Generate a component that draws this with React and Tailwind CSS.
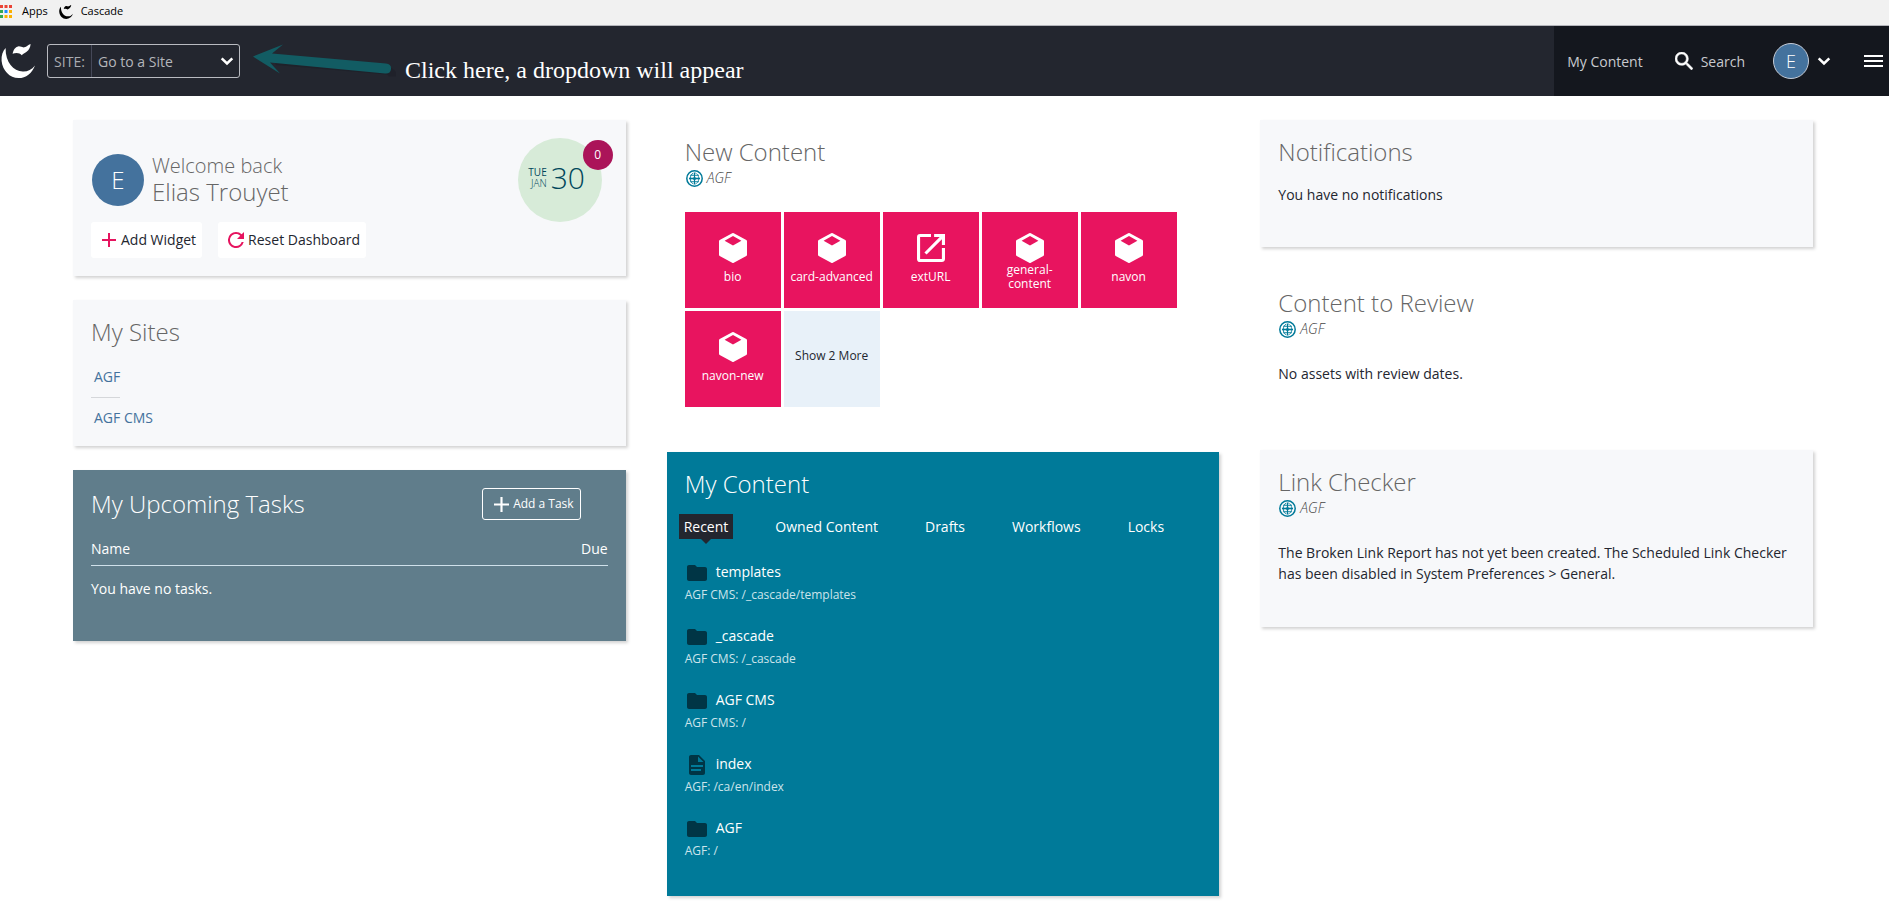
import React from "react";

const card = "bg-[#f7f8fa] shadow-[2px_2px_3px_rgba(0,0,0,0.18)] px-[18px] pt-4";
const heading = "text-2xl leading-8 font-light";

function CascadeMark({ className }) {
  return (
    <svg viewBox="0 0 34 34" className={className} fill="currentColor" aria-hidden="true">
      <path d="M4.600 4C1.800 7 0.200 11.500 0.600 17C1.600 26.500 8.600 34 17.600 34C25 34 31 29.400 34 21.400C30.600 25.600 26.600 27.800 21.800 27.600C12.400 27.200 4.400 18.500 4.600 4Z" />
      <path d="M11.600 9.800C12.400 5.600 14.400 2.800 17.200 2.400C19.800 2.100 21 3.800 23.400 3.300C25.800 2.800 27 0.900 29.600 0C29.400 3 28.200 6 25.600 7.800C23.600 9.200 22 9.800 20.800 11.200C18.600 8.800 15.200 8.400 11.600 9.800Z" />
    </svg>
  );
}

function AppsGrid() {
  const dots = ["#ea4335", "#ea4335", "#ea4335", "#34a853", "#1a8cff", "#fbb000", "#34a853", "#fbb000", "#fbb000"];
  return (
    <svg viewBox="0 0 12 13" className="h-[13px] w-3" aria-hidden="true">
      {dots.map((c, i) => (
        <rect key={i} x={(i % 3) * 4.5} y={Math.floor(i / 3) * 5} width="3" height="3" fill={c} />
      ))}
    </svg>
  );
}

function Chevron({ className }) {
  return (
    <svg viewBox="0 0 14 9" className={className} fill="none" stroke="currentColor" strokeWidth="2.600" aria-hidden="true">
      <path d="M1.700 1.400L7 6.400L12.300 1.400" />
    </svg>
  );
}

function Plus({ className }) {
  return (
    <svg viewBox="0 0 14 14" className={className} fill="currentColor" aria-hidden="true">
      <path d="M6 0H8V6H14V8H8V14H6V8H0V6H6Z" />
    </svg>
  );
}

function Globe() {
  return (
    <svg viewBox="0 0 17 17" className="h-[17px] w-[17px] shrink-0 text-[#007a99]" fill="none" stroke="currentColor" aria-hidden="true">
      <circle cx="8.500" cy="8.500" r="7.700" strokeWidth="1.500" />
      <ellipse cx="8.500" cy="8.500" rx="4.200" ry="5.600" strokeWidth="0.900" strokeDasharray="2.400 0.700" />
      <path d="M8.500 2.900V14.100" strokeWidth="1.200" />
      <path d="M3 8.500H14" strokeWidth="1.600" />
      <path d="M4 5.300H13M4 11.700H13" strokeWidth="0.900" />
      <circle cx="8.500" cy="8.500" r="1.500" fill="currentColor" stroke="none" />
    </svg>
  );
}

function Cube() {
  return (
    <svg viewBox="0 0 28 30" className="h-[30px] w-7" fill="currentColor" fillRule="evenodd" aria-hidden="true">
      <path d="M13.200 0.200Q14 -0.200 14.800 0.200L27.300 7Q28 7.400 28 8.200V21.800Q28 22.600 27.300 23L14.800 29.800Q14 30.200 13.200 29.800L0.700 23Q0 22.600 0 21.800V8.200Q0 7.400 0.700 7ZM14 3L5.600 7.700L14 12.600L22.400 7.700Z" />
    </svg>
  );
}

function External() {
  return (
    <svg viewBox="3 2.400 18 19.200" className="h-[30px] w-7" fill="currentColor" aria-hidden="true">
      <path d="M19 19H5V5h7V3H5a2 2 0 0 0-2 2v14a2 2 0 0 0 2 2h14c1.100 0 2-.9 2-2v-7h-2v7zM14 3v2h3.590l-9.830 9.830 1.410 1.410L19 6.410V10h2V3h-7z" />
    </svg>
  );
}

function Folder() {
  return (
    <svg viewBox="0 0 24 24" className="h-6 w-6 shrink-0 text-[#003545]" fill="currentColor" aria-hidden="true">
      <path d="M10 4H4c-1.100 0-1.990.9-1.990 2L2 18c0 1.100.9 2 2 2h16c1.100 0 2-.9 2-2V8c0-1.100-.9-2-2-2h-8l-2-2z" />
    </svg>
  );
}

function Doc() {
  return (
    <svg viewBox="0 0 24 24" className="h-6 w-6 shrink-0 text-[#003545]" fill="currentColor" aria-hidden="true">
      <path d="M14 2H6c-1.100 0-1.990.9-1.990 2L4 20c0 1.100.89 2 1.990 2H18c1.100 0 2-.9 2-2V8l-6-6zm2 16H6v-2h10v2zm2-4H6v-2h12v2zm-5-5V3.500L18.500 9H13z" />
    </svg>
  );
}

function SiteTag() {
  return (
    <div className="flex h-5 items-center gap-1 pl-px">
      <Globe />
      <span className="text-sm leading-5 font-light text-[#444] italic">AGF</span>
    </div>
  );
}

function Header() {
  return (
    <header className="flex h-[70px] bg-[#23262f] text-sm text-[#c8cacf]">
      <div className="flex flex-1 items-center pl-px">
        <a href="#home" aria-label="Cascade home" className="text-white">
          <CascadeMark className="h-[34px] w-[34px]" />
        </a>
        <div className="relative ml-3 flex h-[34px] w-[193px] items-center rounded-[3px] border border-[#b9bbc1]">
          <label htmlFor="site" className="flex h-full w-11 items-center justify-center border-r border-[#454858] pt-0.5 text-[#a9abb1]">
            SITE:
          </label>
          <select id="site" className="h-full flex-1 appearance-none bg-transparent pt-0.5 pl-1.5 text-[#b4b6bb] outline-none">
            <option>Go to a Site</option>
          </select>
          <Chevron className="pointer-events-none absolute top-3 right-[5px] h-[9px] w-3.5 text-white" />
        </div>
        <svg viewBox="0 0 144 40" className="ml-3 h-10 w-36" aria-hidden="true">
          <path d="M22 17L133 26.500Q139 28.500 139 32.500" stroke="#1a1c22" strokeWidth="8" fill="none" opacity="0.400" transform="translate(2 3)" />
          <path d="M1 15.500L31 3.500L20 12.500L134 22.500Q139.500 23 139 28Q138.500 33 133 32.500L18 21.500L28 32.500Z" fill="#125c63" />
        </svg>
        <p className="mt-[18px] ml-[9px] font-['Liberation_Serif',serif] text-2xl leading-8 text-white">Click here, a dropdown will appear</p>
      </div>
      <nav className="flex items-center bg-[#14171e] pr-1.5 pl-[13px]">
        <a href="#content" className="pt-0.5">My Content</a>
        <a href="#search" className="ml-8 flex items-center gap-2">
          <svg viewBox="3 3 17.500 17.500" className="h-[18px] w-[18px] text-white" fill="currentColor" stroke="currentColor" strokeWidth="0.500" aria-hidden="true">
            <path d="M15.500 14h-.79l-.28-.27A6.470 6.470 0 0 0 16 9.500 6.500 6.500 0 1 0 9.500 16c1.610 0 3.090-.59 4.230-1.570l.27.28v.79l5 4.990L20.490 19l-4.990-5zm-6 0C7.010 14 5 11.990 5 9.500S7.010 5 9.500 5 14 7.010 14 9.500 11.990 14 9.500 14z" />
          </svg>
          <span className="pt-0.5">Search</span>
        </a>
        <button type="button" aria-label="User menu" className="ml-7 flex items-center gap-2">
          <span className="flex h-9 w-9 items-center justify-center rounded-full border border-[#c5cbd6] bg-[#44729d] text-lg font-light text-white">E</span>
          <Chevron className="h-[9px] w-3.5 text-white" />
        </button>
        <button type="button" aria-label="Menu" className="ml-[33px] flex w-[19px] flex-col gap-[3px]">
          <span className="h-0.5 w-full bg-white" />
          <span className="h-0.5 w-full bg-white" />
          <span className="h-0.5 w-full bg-white" />
        </button>
      </nav>
    </header>
  );
}

function Welcome() {
  return (
    <section className={`${card} relative pb-[18px]`}>
      <div className="mt-[18px] flex h-[52px] items-center gap-2 pl-px">
        <span className="flex h-[52px] w-[52px] items-center justify-center rounded-full bg-[#44729d] text-2xl font-light text-white">E</span>
        <h1 className="pb-[3px] font-light text-[#666]">
          <span className="block text-xl leading-[26px]">Welcome back</span>
          <span className="block text-2xl leading-[26px]">Elias Trouyet</span>
        </h1>
      </div>
      <div className="mt-4 flex gap-4">
        <button type="button" className="flex h-9 items-center gap-[5px] rounded-[3px] bg-white pr-1.5 pl-[11px] text-sm text-[#23262f]">
          <Plus className="h-3.5 w-3.5 text-[#e6145f]" />
          Add Widget
        </button>
        <button type="button" className="flex h-9 items-center gap-1 rounded-[3px] bg-white pr-1.5 pl-2.5 text-sm text-[#23262f]">
          <svg viewBox="4 4 16 16" className="h-4 w-4 text-[#e6145f]" fill="currentColor" aria-hidden="true">
            <path d="M17.650 6.350A7.958 7.958 0 0 0 12 4a8 8 0 1 0 7.730 10h-2.080A5.990 5.990 0 0 1 12 18c-3.310 0-6-2.690-6-6s2.690-6 6-6c1.660 0 3.140.69 4.220 1.780L13 11h7V4l-2.350 2.350z" />
          </svg>
          Reset Dashboard
        </button>
      </div>
      <div className="absolute top-[18px] right-6 flex h-[84px] w-[84px] items-center justify-center gap-1 rounded-full bg-[#d7ebd8] pr-1.5 pb-1 font-light text-[#00475c]">
        <div className="text-right text-[10px] leading-[11px]">
          <div className="font-normal">TUE</div>
          <div>JAN</div>
        </div>
        <div className="text-3xl leading-9">30</div>
        <span className="absolute top-0.5 -right-[11px] flex h-[30px] w-[30px] items-center justify-center rounded-full bg-[#ab1459] text-xs font-normal text-white">0</span>
      </div>
    </section>
  );
}

function MySites() {
  return (
    <section className={`${card} pb-[18px]`}>
      <h2 className={`${heading} text-[#666]`}>My Sites</h2>
      <ul className="mt-[19px] flex flex-col items-start text-sm leading-5 text-[#44729d]">
        <li className="border-b border-[#d5d7da] pb-2.5 pl-[3px]"><a href="#agf">AGF</a></li>
        <li className="pt-2.5 pl-[3px]"><a href="#agf-cms">AGF CMS</a></li>
      </ul>
    </section>
  );
}

function Tasks() {
  return (
    <section className="bg-[#607d8b] px-[18px] pt-[18px] pb-[42px] text-white shadow-[2px_2px_3px_rgba(0,0,0,0.18)]">
      <div className="flex items-center justify-between">
        <h2 className={heading}>My Upcoming Tasks</h2>
        <button type="button" className="mr-[27px] flex h-8 items-center gap-1 rounded-[3px] border border-white pr-1.5 pl-[11px] text-xs">
          <Plus className="h-[15px] w-[15px]" />
          Add a Task
        </button>
      </div>
      <table className="mt-3.5 w-full text-sm leading-[21px]">
        <thead>
          <tr className="border-b border-[#cfe0ea]">
            <th className="pt-1 pb-1.5 text-left font-normal">Name</th>
            <th className="pt-1 pb-1.5 text-right font-normal">Due</th>
          </tr>
        </thead>
        <tbody>
          <tr><td colSpan={2} className="pt-3">You have no tasks.</td></tr>
        </tbody>
      </table>
    </section>
  );
}

const tiles = ["bio", "card-advanced", "extURL", "general-content", "navon", "navon-new"];

function NewContent() {
  return (
    <section className="px-[18px] pt-4 pb-[21px]">
      <h2 className={`${heading} text-[#666]`}>New Content</h2>
      <SiteTag />
      <div className="mt-6 flex flex-wrap gap-[3px]">
        {tiles.map((t) => (
          <button key={t} type="button" className="flex h-24 w-24 flex-col items-center bg-[#e8145f] px-1.5 pt-[21px] text-xs leading-[14px] text-white">
            {t === "extURL" ? <External /> : <Cube />}
            <span className="flex h-7 items-center">{t}</span>
          </button>
        ))}
        <button type="button" className="h-24 w-24 bg-[#e8f1f9] pb-1.5 text-xs text-[#23262f]">Show 2 More</button>
      </div>
    </section>
  );
}

const items = [
  ["templates", "AGF CMS: /_cascade/templates"],
  ["_cascade", "AGF CMS: /_cascade"],
  ["AGF CMS", "AGF CMS: /"],
  ["index", "AGF: /ca/en/index"],
  ["AGF", "AGF: /"],
];

function MyContent() {
  return (
    <section className="bg-[#007a99] px-[18px] pt-4 pb-9 text-white shadow-[2px_2px_3px_rgba(0,0,0,0.18)]">
      <h2 className={heading}>My Content</h2>
      <div role="tablist" className="mt-3.5 -ml-1.5 flex gap-[37px] text-sm">
        {["Recent", "Owned Content", "Drafts", "Workflows", "Locks"].map((t, i) => (
          <button key={t} type="button" role="tab" aria-selected={i === 0} className={`relative h-[25px] px-[5px] ${i === 0 ? "bg-[#23262f]" : ""}`}>
            {t}
            {i === 0 && <span className="absolute top-full left-1/2 -ml-[5px] border-x-[5px] border-t-[5px] border-x-transparent border-t-[#23262f]" />}
          </button>
        ))}
      </div>
      <ul className="mt-[22px] flex flex-col gap-[21px]">
        {items.map(([name, path]) => (
          <li key={name}>
            <a href={`#${name}`} className="flex h-[25px] items-start gap-[7px] text-sm leading-[21px]">
              {name === "index" ? <Doc /> : <Folder />}
              {name}
            </a>
            <p className="text-xs leading-[18px] text-[#cce4eb]">{path}</p>
          </li>
        ))}
      </ul>
    </section>
  );
}

export default function App() {
  return (
    <div className="min-h-screen bg-white font-['Open_Sans',sans-serif]">
      <div className="flex h-[26px] items-start border-b border-[#b4b5bb] bg-[#f1f1f1] text-[11px] text-black">
        <a href="#apps" className="flex h-[22px] items-center gap-2.5"><AppsGrid />Apps</a>
        <a href="#cascade" className="ml-[11px] flex h-[22px] items-center gap-2">
          <CascadeMark className="mt-0.5 h-3.5 w-3.5" />
          Cascade
        </a>
      </div>
      <Header />
      <main className="grid grid-cols-3 items-start gap-x-[41px] pt-6 pr-[76px] pb-5 pl-[73px]">
        <div className="flex flex-col gap-6">
          <Welcome />
          <MySites />
          <Tasks />
        </div>
        <div className="flex flex-col gap-6">
          <NewContent />
          <MyContent />
        </div>
        <div className="flex flex-col gap-6 text-sm leading-[21px] text-[#23262f]">
          <section className={`${card} pb-[42px]`}>
            <h2 className={`${heading} text-[#666]`}>Notifications</h2>
            <p className="mt-4">You have no notifications</p>
          </section>
          <section className="px-[18px] pt-4 pb-[42px]">
            <h2 className={`${heading} text-[#666]`}>Content to Review</h2>
            <SiteTag />
            <p className="mt-6">No assets with review dates.</p>
          </section>
          <section className={`${card} pb-[43px]`}>
            <h2 className={`${heading} text-[#666]`}>Link Checker</h2>
            <SiteTag />
            <p className="mt-6">The Broken Link Report has not yet been created. The Scheduled Link Checker has been disabled in System Preferences &gt; General.</p>
          </section>
        </div>
      </main>
    </div>
  );
}
